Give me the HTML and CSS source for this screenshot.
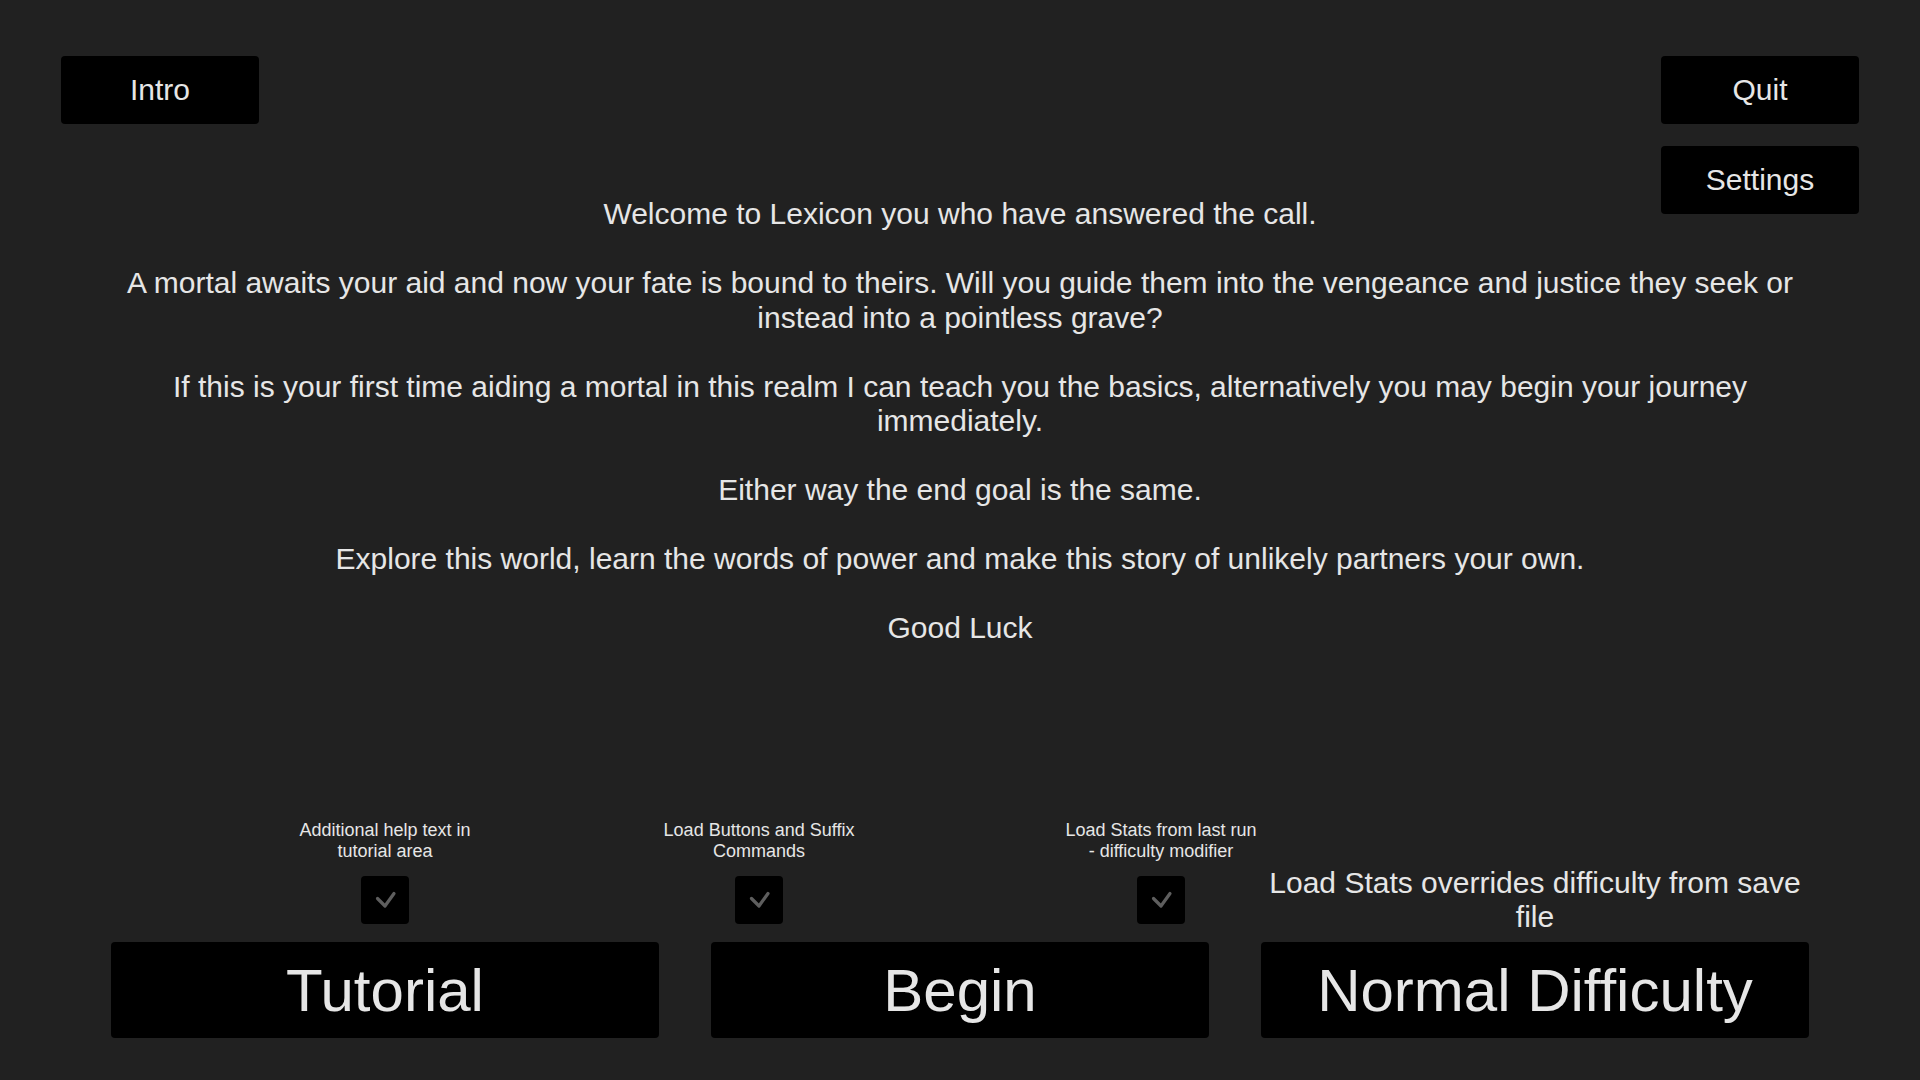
FILE: index.html
```html
<!DOCTYPE html>
<html lang="en">
<head>
<meta charset="utf-8">
<title>Lexicon</title>
<link rel="stylesheet" href="styles.css">
</head>
<body>
<div class="page">
  <button class="btn btn-small btn-intro">Intro</button>
  <button class="btn btn-small btn-quit">Quit</button>
  <button class="btn btn-small btn-settings">Settings</button>

  <div class="story">
    <p>Welcome to Lexicon you who have answered the call.</p>
    <p>A mortal awaits your aid and now your fate is bound to theirs. Will you guide them into the vengeance and justice they seek or instead into a pointless grave?</p>
    <p>If this is your first time aiding a mortal in this realm I can teach you the basics, alternatively you may begin your journey immediately.</p>
    <p>Either way the end goal is the same.</p>
    <p>Explore this world, learn the words of power and make this story of unlikely partners your own.</p>
    <p>Good Luck</p>
  </div>

  <div class="bottom">
    <div class="options">
      <div class="opt-col opt-col-single">
        <div class="option">
          <div class="opt-label">Additional help text in tutorial area</div>
          <div class="checkbox"><svg viewBox="0 0 48 48" width="48" height="48"><path d="M16.5 22.5 L24 30 L33 17.5" /></svg></div>
        </div>
      </div>
      <div class="opt-col opt-col-pair">
        <div class="option">
          <div class="opt-label">Load Buttons and Suffix Commands</div>
          <div class="checkbox"><svg viewBox="0 0 48 48" width="48" height="48"><path d="M16.5 22.5 L24 30 L33 17.5" /></svg></div>
        </div>
        <div class="option">
          <div class="opt-label">Load Stats from last run - difficulty modifier</div>
          <div class="checkbox"><svg viewBox="0 0 48 48" width="48" height="48"><path d="M16.5 22.5 L24 30 L33 17.5" /></svg></div>
        </div>
      </div>
      <div class="opt-col opt-col-note">
        <div class="note">Load Stats overrides difficulty from save file</div>
      </div>
    </div>
    <div class="actions">
      <button class="btn btn-big btn-wide">Tutorial</button>
      <button class="btn btn-big btn-mid">Begin</button>
      <button class="btn btn-big btn-wide">Normal Difficulty</button>
    </div>
  </div>
</div>
</body>
</html>
```
FILE: styles.css
```css
* {
  box-sizing: border-box;
}

html, body {
  margin: 0;
  padding: 0;
  height: 100%;
}

body {
  background: #212121;
  color: #e6e6e6;
  font-family: "Liberation Sans", Arial, sans-serif;
  overflow: hidden;
}

.page {
  height: 1080px;
  padding: 56px 61px 42px;
  display: grid;
  grid-template-columns: 198px 1fr 198px;
  grid-template-rows: 68px 68px auto 1fr auto;
  row-gap: 22px;
}

.btn {
  background: #000;
  color: #e6e6e6;
  border: none;
  border-radius: 4px;
  font-family: "Liberation Sans", Arial, sans-serif;
  padding: 0;
  margin: 0;
  cursor: pointer;
}

.btn-small {
  width: 198px;
  height: 68px;
  font-size: 30px;
}

.btn-intro {
  grid-row: 1;
  grid-column: 1;
}

.btn-quit {
  grid-row: 1;
  grid-column: 3;
}

.btn-settings {
  grid-row: 2;
  grid-column: 3;
}

.story {
  grid-row: 2 / 4;
  grid-column: 1 / -1;
  justify-self: center;
  width: 1720px;
  margin-top: 51px;
  text-align: center;
  font-size: 30px;
  line-height: 34.5px;
}

.story p {
  margin: 0 0 34.5px;
}

.story p:last-child {
  margin-bottom: 0;
}

.bottom {
  grid-row: 5;
  grid-column: 1 / -1;
  justify-self: center;
  width: 1698px;
}

.options {
  display: grid;
  grid-template-columns: 548px 602px 548px;
  align-items: end;
}

.opt-col-single {
  display: flex;
  justify-content: center;
}

.opt-col-pair {
  display: flex;
  justify-content: space-between;
}

.option {
  width: 200px;
  display: flex;
  flex-direction: column;
  align-items: center;
}

.opt-label {
  width: 196px;
  font-size: 18px;
  line-height: 21px;
  text-align: center;
  margin-bottom: 14px;
}

.checkbox {
  width: 48px;
  height: 48px;
  background: #000;
  border-radius: 4px;
  margin-bottom: 18px;
}

.checkbox svg {
  display: block;
}

.checkbox path {
  fill: none;
  stroke: #5e5e5e;
  stroke-width: 3.2;
  stroke-linecap: round;
  stroke-linejoin: round;
}

.note {
  font-size: 30px;
  line-height: 34px;
  text-align: center;
  margin-bottom: 8px;
}

.actions {
  display: flex;
  gap: 52px;
}

.btn-big {
  height: 96px;
  font-size: 60px;
}

.btn-wide {
  width: 548px;
}

.btn-mid {
  width: 498px;
}
```
